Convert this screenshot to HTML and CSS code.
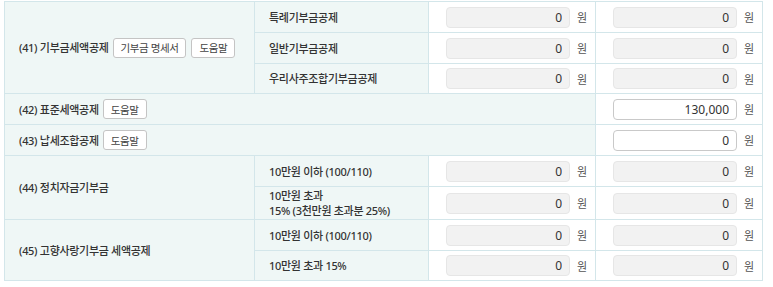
FILE: index.html
```html
<!DOCTYPE html>
<html lang="ko">
<head>
    <meta charset="UTF-8">
    <meta name="viewport" content="width=device-width, initial-scale=1.0">
    <title>세액공제</title>
    <link rel="stylesheet" href="styles.css">
</head>
<body>
    <table class="tax-table">
        <colgroup>
            <col class="col-label">
            <col class="col-sub">
            <col class="col-amount">
            <col class="col-amount">
        </colgroup>
        <tbody>
            <!-- (41) 기부금세액공제 -->
            <tr>
                <th rowspan="3" class="label">
                    <div class="label-inner">
                        <span>(41) 기부금세액공제</span>
                        <button class="btn">기부금 명세서</button>
                        <button class="btn">도움말</button>
                    </div>
                </th>
                <th class="sub">특례기부금공제</th>
                <td class="amount"><input class="money" type="text" value="0" disabled><span class="unit">원</span></td>
                <td class="amount"><input class="money" type="text" value="0" disabled><span class="unit">원</span></td>
            </tr>
            <tr>
                <th class="sub">일반기부금공제</th>
                <td class="amount"><input class="money" type="text" value="0" disabled><span class="unit">원</span></td>
                <td class="amount"><input class="money" type="text" value="0" disabled><span class="unit">원</span></td>
            </tr>
            <tr class="short">
                <th class="sub">우리사주조합기부금공제</th>
                <td class="amount"><input class="money" type="text" value="0" disabled><span class="unit">원</span></td>
                <td class="amount"><input class="money" type="text" value="0" disabled><span class="unit">원</span></td>
            </tr>

            <!-- (42) 표준세액공제 -->
            <tr>
                <th colspan="3" class="label">
                    <div class="label-inner">
                        <span>(42) 표준세액공제</span>
                        <button class="btn">도움말</button>
                    </div>
                </th>
                <td class="amount"><input class="money" type="text" value="130,000"><span class="unit">원</span></td>
            </tr>

            <!-- (43) 납세조합공제 -->
            <tr>
                <th colspan="3" class="label">
                    <div class="label-inner">
                        <span>(43) 납세조합공제</span>
                        <button class="btn">도움말</button>
                    </div>
                </th>
                <td class="amount"><input class="money" type="text" value="0"><span class="unit">원</span></td>
            </tr>

            <!-- (44) 정치자금기부금 -->
            <tr>
                <th rowspan="2" class="label">(44) 정치자금기부금</th>
                <th class="sub">10만원 이하 (100/110)</th>
                <td class="amount"><input class="money" type="text" value="0" disabled><span class="unit">원</span></td>
                <td class="amount"><input class="money" type="text" value="0" disabled><span class="unit">원</span></td>
            </tr>
            <tr class="tall">
                <th class="sub">10만원 초과<br>15% (3천만원 초과분 25%)</th>
                <td class="amount"><input class="money" type="text" value="0" disabled><span class="unit">원</span></td>
                <td class="amount"><input class="money" type="text" value="0" disabled><span class="unit">원</span></td>
            </tr>

            <!-- (45) 고향사랑기부금 세액공제 -->
            <tr>
                <th rowspan="2" class="label">(45) 고향사랑기부금 세액공제</th>
                <th class="sub">10만원 이하 (100/110)</th>
                <td class="amount"><input class="money" type="text" value="0" disabled><span class="unit">원</span></td>
                <td class="amount"><input class="money" type="text" value="0" disabled><span class="unit">원</span></td>
            </tr>
            <tr class="short">
                <th class="sub">10만원 초과 15%</th>
                <td class="amount"><input class="money" type="text" value="0" disabled><span class="unit">원</span></td>
                <td class="amount"><input class="money" type="text" value="0" disabled><span class="unit">원</span></td>
            </tr>
        </tbody>
    </table>
</body>
</html>
```

FILE: styles.css
```css
/* General Styles */
body {
    font-family: "Noto Sans", "Noto Sans CJK KR", sans-serif;
    font-size: 11px;
    letter-spacing: -0.3px;
    color: #333;
    background-color: #fff;
    margin: 0;
    padding: 1px 4px;
    font-feature-settings: "palt";
}

.tax-table {
    width: 759px;
    border-collapse: collapse;
    table-layout: fixed;
}

.col-label {
    width: 250px;
}

.col-sub {
    width: 174px;
}

.col-amount {
    width: 167px;
}

.tax-table th,
.tax-table td {
    border: 1px solid #d3e6ea;
    height: 31px;
    padding: 0;
    box-sizing: border-box;
}

.tax-table tr.short th,
.tax-table tr.short td {
    height: 30px;
}

.tax-table tr.tall th,
.tax-table tr.tall td {
    height: 33px;
}

.label,
.sub {
    background-color: #eff7f6;
    text-align: left;
    font-weight: 500;
    padding: 0 14px !important;
    line-height: 15px;
    white-space: nowrap;
}

.label-inner {
    display: flex;
    align-items: center;
    gap: 5px;
}

.label-inner span {
    margin-right: -1px;
}

.btn {
    flex-shrink: 0;
    font-family: inherit;
    font-feature-settings: "palt";
    font-size: 10.5px;
    letter-spacing: -0.4px;
    font-weight: 400;
    color: #444;
    background-color: #fff;
    border: 1px solid #c4c4c4;
    border-radius: 3px;
    height: 20px;
    padding: 0 7px;
    white-space: nowrap;
    cursor: pointer;
}

.amount {
    text-align: right;
    padding-right: 9px !important;
    white-space: nowrap;
}

.money {
    width: 124px;
    height: 21px;
    box-sizing: border-box;
    border: 1px solid #e6e6e6;
    border-radius: 4px;
    background-color: #f2f2f2;
    text-align: right;
    padding: 0 7px;
    font-family: inherit;
    font-size: 12px;
    letter-spacing: 0;
    color: #333;
    vertical-align: middle;
}

.money:not([disabled]) {
    background-color: #fff;
    border-color: #c9c9c9;
}

.unit {
    display: inline-block;
    width: 9px;
    margin-left: 7px;
    font-size: 11px;
    color: #555;
    vertical-align: middle;
}
```
